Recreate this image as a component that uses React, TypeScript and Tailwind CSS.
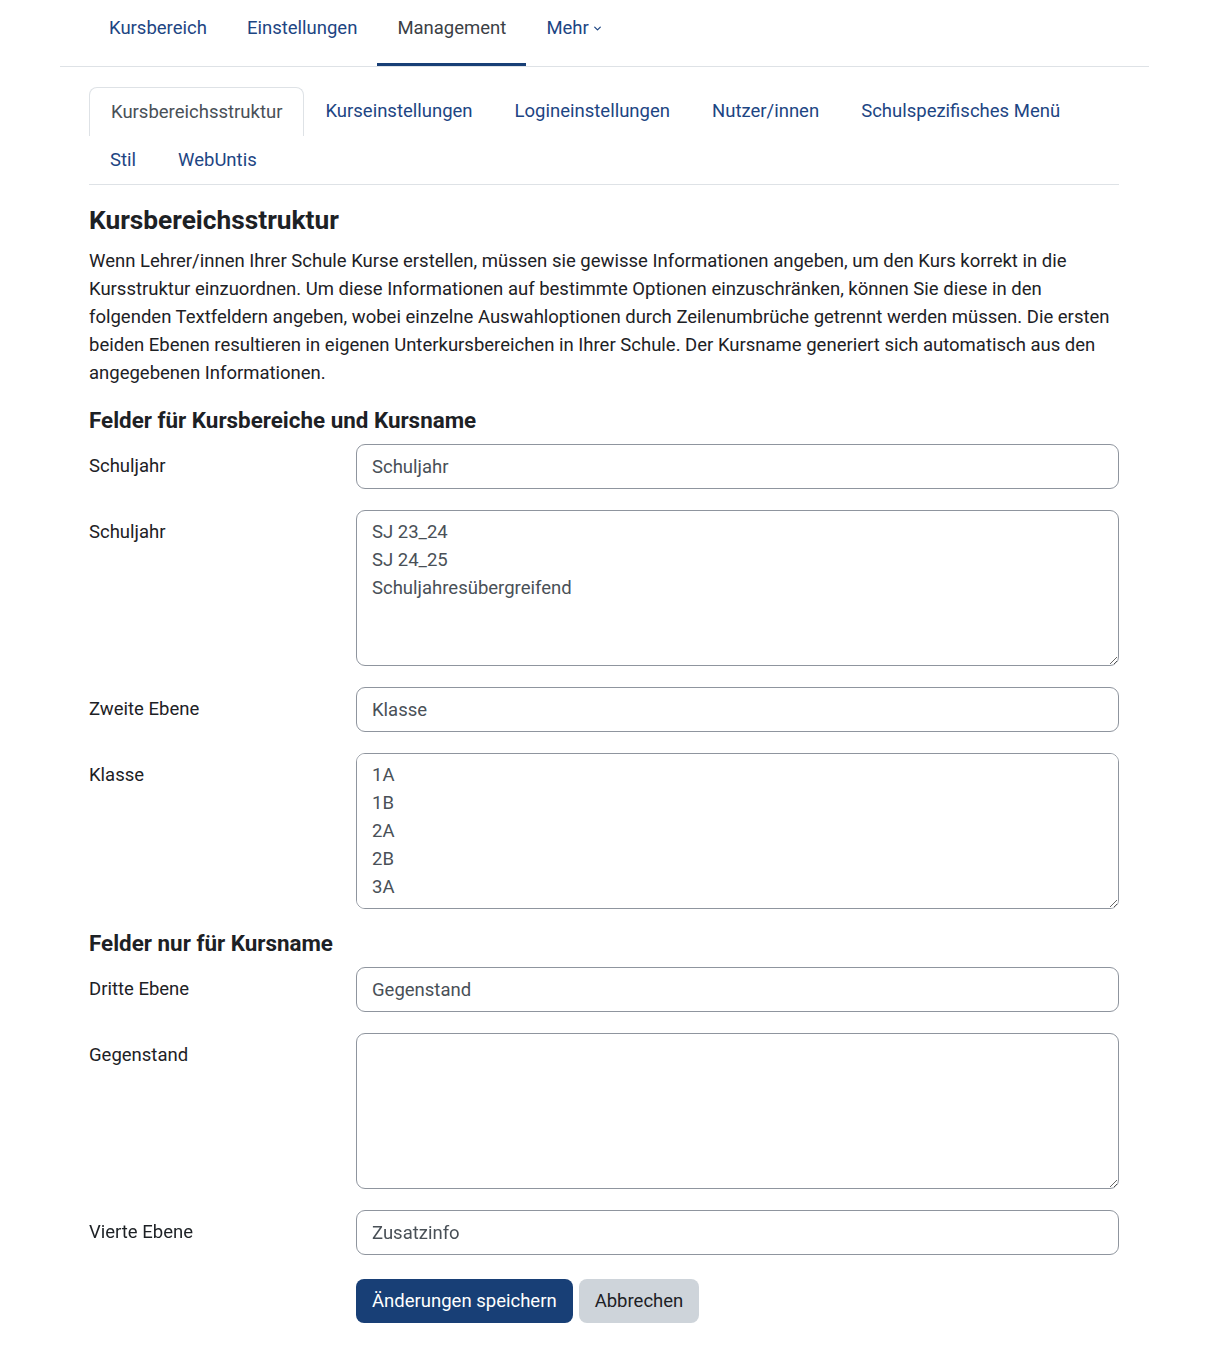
import React from "react"

const font = { fontFamily: "Roboto, 'Liberation Sans', sans-serif" }

const topNav = [
  { label: "Kursbereich" },
  { label: "Einstellungen" },
  { label: "Management", active: true },
  { label: "Mehr", dropdown: true },
]

const subTabs = [
  { label: "Kursbereichsstruktur", active: true },
  { label: "Kurseinstellungen" },
  { label: "Logineinstellungen" },
  { label: "Nutzer/innen" },
  { label: "Schulspezifisches Menü" },
  { label: "Stil" },
  { label: "WebUntis" },
]

type Field =
  | { kind: "heading"; text: string }
  | { kind: "input"; label: string; value: string }
  | { kind: "textarea"; label: string; value: string }

const fields: Field[] = [
  { kind: "heading", text: "Felder für Kursbereiche und Kursname" },
  { kind: "input", label: "Schuljahr", value: "Schuljahr" },
  {
    kind: "textarea",
    label: "Schuljahr",
    value: "SJ 23_24\nSJ 24_25\nSchuljahresübergreifend",
  },
  { kind: "input", label: "Zweite Ebene", value: "Klasse" },
  { kind: "textarea", label: "Klasse", value: "1A\n1B\n2A\n2B\n3A\n3B\n4A" },
  { kind: "heading", text: "Felder nur für Kursname" },
  { kind: "input", label: "Dritte Ebene", value: "Gegenstand" },
  { kind: "textarea", label: "Gegenstand", value: "" },
  { kind: "input", label: "Vierte Ebene", value: "Zusatzinfo" },
]

function Chevron() {
  return (
    <svg className="ml-[4px] inline-block h-[9px] w-[9px]" viewBox="0 0 16 16" fill="none">
      <path d="M3 5.5l5 5 5-5" stroke="currentColor" strokeWidth={2.2} strokeLinecap="round" strokeLinejoin="round" />
    </svg>
  )
}

function FormRow({ field }: { field: Field }) {
  if (field.kind === "heading") {
    return (
      <h3 className="mb-[11px] text-[22.4px] font-bold leading-[26px] text-[#1d2125]">
        {field.text}
      </h3>
    )
  }
  return (
    <div className="mb-[21px] grid grid-cols-[267px_1fr]">
      <label className="pt-[8px] text-[#1d2125]">{field.label}</label>
      {field.kind === "input" ? (
        <input
          readOnly
          defaultValue={field.value}
          className="h-[45px] w-full rounded-[9px] border border-[#8f959e] bg-white px-[15px] text-[#495057] outline-none"
        />
      ) : (
        <textarea
          readOnly
          defaultValue={field.value}
          className="block h-[156px] w-full resize-y rounded-[9px] border border-[#8f959e] bg-white px-[15px] py-[7px] text-[#495057] outline-none"
        />
      )}
    </div>
  )
}

export default function App() {
  return (
    <div className="min-h-[1358px] bg-white text-[18.5px] leading-[28px] text-[#1d2125]" style={font}>
      <div className="mx-[60px]">
        <nav className="flex border-b border-[#dee2e6] pl-[29px]">
          {topNav.map((item) => (
            <a
              key={item.label}
              className={`flex items-center border-b-[3px] px-[20px] pt-[14px] pb-[21px] ${
                item.active ? "border-[#183f76] text-[#3b4045]" : "border-transparent text-[#1d4583]"
              }`}
            >
              {item.label}
              {item.dropdown && <Chevron />}
            </a>
          ))}
        </nav>

        <div className="ml-[29px] mr-[30px]">
          <div className="mt-[20px] flex flex-wrap border-b border-[#dee2e6]">
            {subTabs.map((tab) => (
              <a
                key={tab.label}
                className={`h-[48.5px] px-[21px] py-[10px] ${
                  tab.active
                    ? "rounded-t-[8px] border border-b-0 border-[#dee2e6] px-[20px] text-[#495057]"
                    : "text-[#1d4583]"
                }`}
              >
                {tab.label}
              </a>
            ))}
          </div>

          <h2 className="mt-[20px] mb-[11px] text-[26.3px] font-bold leading-[31px]">Kursbereichsstruktur</h2>
          <p className="mb-[20px]">
            Wenn Lehrer/innen Ihrer Schule Kurse erstellen, müssen sie gewisse Informationen angeben, um den Kurs
            korrekt in die Kursstruktur einzuordnen. Um diese Informationen auf bestimmte Optionen einzuschränken, können
            Sie diese in den folgenden Textfeldern angeben, wobei einzelne Auswahloptionen durch Zeilenumbrüche getrennt
            werden müssen. Die ersten beiden Ebenen resultieren in eigenen Unterkursbereichen in Ihrer Schule. Der
            Kursname generiert sich automatisch aus den angegebenen Informationen.
          </p>

          <form>
            {fields.map((f, i) => (
              <FormRow key={i} field={f} />
            ))}
            <div className="grid grid-cols-[267px_1fr] pt-[3px]">
              <div />
              <div className="flex gap-[6px]">
                <button
                  type="button"
                  className="h-[44px] rounded-[8px] bg-[#183f76] px-[16px] text-white"
                >
                  Änderungen speichern
                </button>
                <button
                  type="button"
                  className="h-[44px] rounded-[8px] bg-[#ced4da] px-[16px] text-[#1d2125]"
                >
                  Abbrechen
                </button>
              </div>
            </div>
          </form>
        </div>
      </div>
    </div>
  )
}
